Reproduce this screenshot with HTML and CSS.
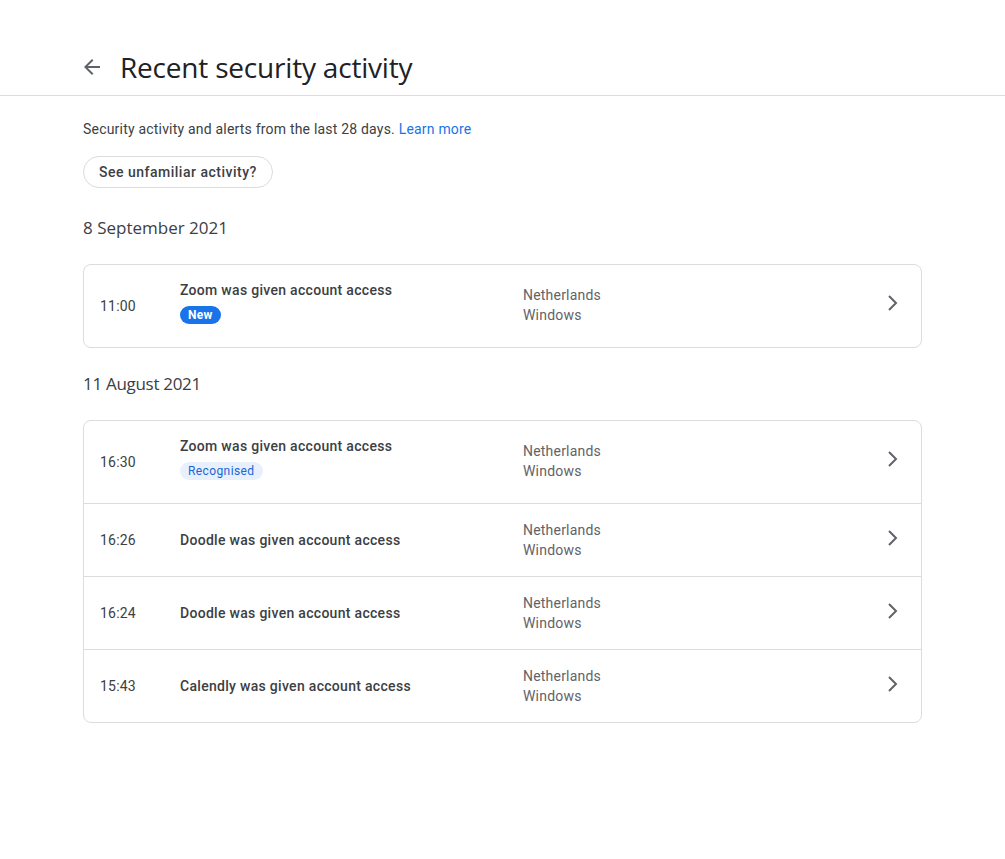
FILE: index.html
```html
<!DOCTYPE html>
<html lang="en">
<head>
<meta charset="utf-8">
<title>Recent security activity</title>
<link rel="stylesheet" href="styles.css">
</head>
<body>
<header class="topbar">
  <div class="topbar-inner">
    <span class="back">
      <svg viewBox="0 0 24 24" width="24" height="24"><path d="M20 11H7.83l5.59-5.59L12 4l-8 8 8 8 1.41-1.41L7.83 13H20v-2z"/></svg>
    </span>
    <h1 class="title">Recent security activity</h1>
  </div>
</header>
<main class="content">
  <p class="intro">Security activity and alerts from the last 28 days. <a class="link" href="#">Learn more</a></p>
  <button class="pill">See unfamiliar activity?</button>

  <h2 class="date">8 September 2021</h2>
  <div class="card">
    <div class="row tall">
      <div class="time">11:00</div>
      <div class="event">
        <div class="event-title">Zoom was given account access</div>
        <span class="badge new">New</span>
      </div>
      <div class="where">Netherlands<br>Windows</div>
      <svg class="chev" viewBox="0 0 24 24" width="24" height="24"><path d="M9 5l7 7-7 7"/></svg>
    </div>
  </div>

  <h2 class="date">11 August 2021</h2>
  <div class="card">
    <div class="row tall">
      <div class="time">16:30</div>
      <div class="event">
        <div class="event-title">Zoom was given account access</div>
        <span class="badge known">Recognised</span>
      </div>
      <div class="where">Netherlands<br>Windows</div>
      <svg class="chev" viewBox="0 0 24 24" width="24" height="24"><path d="M9 5l7 7-7 7"/></svg>
    </div>
    <div class="row">
      <div class="time">16:26</div>
      <div class="event"><div class="event-title">Doodle was given account access</div></div>
      <div class="where">Netherlands<br>Windows</div>
      <svg class="chev" viewBox="0 0 24 24" width="24" height="24"><path d="M9 5l7 7-7 7"/></svg>
    </div>
    <div class="row">
      <div class="time">16:24</div>
      <div class="event"><div class="event-title">Doodle was given account access</div></div>
      <div class="where">Netherlands<br>Windows</div>
      <svg class="chev" viewBox="0 0 24 24" width="24" height="24"><path d="M9 5l7 7-7 7"/></svg>
    </div>
    <div class="row">
      <div class="time">15:43</div>
      <div class="event"><div class="event-title">Calendly was given account access</div></div>
      <div class="where">Netherlands<br>Windows</div>
      <svg class="chev" viewBox="0 0 24 24" width="24" height="24"><path d="M9 5l7 7-7 7"/></svg>
    </div>
  </div>
</main>
</body>
</html>
```
FILE: styles.css
```css
* { box-sizing: border-box; }
html, body { margin: 0; padding: 0; background: #fff; }
body {
  font-family: Roboto, "Liberation Sans", Arial, sans-serif;
  color: #3c4043;
  font-size: 14px;
  line-height: 20px;
  letter-spacing: 0.2px;
}
.topbar {
  border-bottom: 1px solid #dadce0;
  height: 96px;
}
.topbar-inner {
  display: flex;
  align-items: center;
  padding: 49px 0 0 80px;
  gap: 16px;
}
.back { display: flex; width: 24px; height: 24px; }
.back svg { fill: #5f6368; }
.title {
  margin: 0;
  font-family: "Open Sans", Roboto, sans-serif;
  font-weight: 400;
  font-size: 28px;
  line-height: 36px;
  color: #202124;
  letter-spacing: -0.2px;
}
.content {
  width: 839px;
  margin-left: 83px;
  padding-top: 23px;
}
.intro { margin: 0; color: #3c4043; }
.link { color: #1a73e8; text-decoration: none; }
.pill {
  margin-top: 17px;
  height: 32px;
  padding: 0 15px;
  border: 1px solid #dadce0;
  border-radius: 16px;
  background: #fff;
  font-family: Roboto, sans-serif;
  font-weight: 500;
  font-size: 14px;
  color: #3c4043;
  letter-spacing: 0.5px;
}
.date {
  margin: 28px 0 24px;
  font-family: "Open Sans", Roboto, sans-serif;
  font-weight: 400;
  font-size: 17px;
  line-height: 24px;
  color: #3c4043;
  letter-spacing: 0;
}
.card + .date { margin-top: 24px; letter-spacing: -0.3px; }
.card {
  border: 1px solid #dadce0;
  border-radius: 8px;
}
.row {
  display: grid;
  grid-template-columns: 80px 343px 1fr 24px;
  align-items: center;
  padding: 16px 17px 16px 16px;
  min-height: 72px;
}
.row + .row { border-top: 1px solid #dadce0; }
.row.tall { min-height: 82px; padding-top: 15px; padding-bottom: 23px; }
.row.tall .where { margin-bottom: -6px; }
.row.tall .time { margin-bottom: -8px; }
.row.tall .chev { margin-bottom: -2px; }
.time { color: #3c4043; }
.event-title { font-weight: 500; color: #3c4043; letter-spacing: 0.3px; }
.badge {
  display: inline-block;
  margin-top: 6px;
  height: 18px;
  line-height: 18px;
  padding: 0 8px;
  border-radius: 9px;
  font-size: 12px;
}
.badge.new { background: #1a73e8; color: #fff; font-weight: 700; letter-spacing: 0.3px; }
.badge.known { background: #e8f0fe; color: #1967d2; letter-spacing: 0.4px; }
.where { color: #5f6368; }
.chev { fill: none; stroke: #5f6368; stroke-width: 2; margin-bottom: 5px; }
```
